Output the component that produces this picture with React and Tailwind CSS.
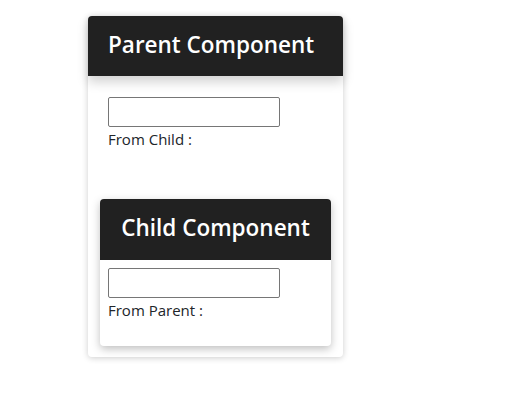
import { useState } from 'react'

const Child = ({ fromParent, onSend }) => {
  return (
    <div className="bg-white rounded-[4px] shadow-[0_3px_8px_rgba(0,0,0,0.25)]">
      <div className="h-[61px] bg-[#212121] rounded-t-[4px] flex items-center justify-center">
        <h2 className="text-[22.5px] font-semibold text-white leading-none -mt-[2px]">Child Component</h2>
      </div>
      <div className="px-2 pt-2 pb-[26px]">
        <input
          type="text"
          onChange={(e) => onSend(e.target.value)}
          className="block w-[172px] h-[30px] border border-[#767676] rounded-[2px] px-1 text-[15px] outline-none"
        />
        <p className="text-[15px] text-[#212529] leading-[20px] mt-[2px]">From Parent : {fromParent}</p>
      </div>
    </div>
  )
}

export default function App() {
  const [toChild, setToChild] = useState('')
  const [fromChild, setFromChild] = useState('')

  return (
    <div className="min-h-[412px] bg-white pt-4 pl-[88px]" style={{ fontFamily: '"Open Sans", "Noto Sans", sans-serif' }}>
      <div className="w-[255px] bg-white rounded-[4px] shadow-[0_1px_6px_rgba(0,0,0,0.2)] pb-[11px]">
        {/* Header */}
        <div className="h-[60px] bg-[#212121] rounded-t-[4px] flex items-center px-5 shadow-[0_6px_12px_rgba(0,0,0,0.18)] relative">
          <h1 className="text-[22.5px] font-semibold text-white leading-none -mt-[2px]">Parent Component</h1>
        </div>

        <div className="px-5 pt-[21px]">
          <input
            type="text"
            value={toChild}
            onChange={(e) => setToChild(e.target.value)}
            className="block w-[172px] h-[30px] border border-[#767676] rounded-[2px] px-1 text-[15px] outline-none"
          />
          <p className="text-[15px] text-[#212529] leading-[20px] mt-[2px]">From Child : {fromChild}</p>
        </div>

        <div className="px-3 mt-[50px]">
          <Child fromParent={toChild} onSend={setFromChild} />
        </div>
      </div>
    </div>
  )
}
